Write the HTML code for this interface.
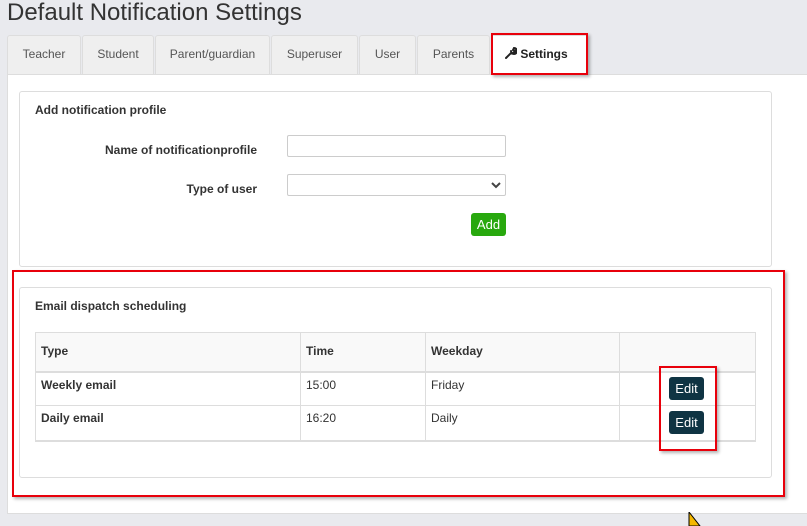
<!DOCTYPE html>
<html><head><meta charset="utf-8"><style>
*{box-sizing:border-box;margin:0;padding:0}
body{width:807px;height:524px;background:#e9eaee;font-family:"Liberation Sans",Arial,sans-serif;position:relative;overflow:hidden;color:#333}
.a{position:absolute}
h1{position:absolute;left:7px;top:0;font-size:24px;font-weight:normal;color:#333;line-height:26px}
.tab{position:absolute;top:35px;height:39px;background:#efefef;border:1px solid #ddd;border-bottom:none;border-radius:3px 3px 0 0;font-size:12px;color:#555;line-height:37px;text-align:center}
.main{position:absolute;left:7px;top:74px;width:810px;height:440px;background:#fff;border:1px solid #ddd}
.panel{position:absolute;left:19px;width:753px;background:#fff;border:1px solid #ddd;border-radius:3px}
.lbl{position:absolute;font-size:12px;font-weight:bold;color:#333;text-align:right}
.inp{position:absolute;left:287px;width:219px;height:22px;border:1px solid #ccc;border-radius:2px;background:#fff}
table{position:absolute;left:35px;top:332px;width:721px;border-collapse:collapse;font-size:12px;color:#333}
td{border:1px solid #ddd;padding:0 5px;vertical-align:top}
.edit{position:absolute;left:669px;width:35px;height:23px;background:#0f3443;border-radius:3px;color:#fff;font-size:13px;text-align:center;line-height:23px}
.red{position:absolute;border:2px solid #e8000b;box-shadow:2px 2px 3px rgba(0,0,0,.3)}
</style></head><body>
<h1>Default Notification Settings</h1>
<div class="main"></div>
<div class="tab" style="left:7px;width:74px">Teacher</div>
<div class="tab" style="left:82px;width:72px">Student</div>
<div class="tab" style="left:155px;width:115px">Parent/guardian</div>
<div class="tab" style="left:271px;width:87px">Superuser</div>
<div class="tab" style="left:359px;width:57px">User</div>
<div class="tab" style="left:417px;width:73px">Parents</div>
<div class="a" style="left:491px;top:35px;width:96px;height:40px;background:#fff;border:1px solid #ddd;border-bottom:none"></div>
<div class="a" style="left:505px;top:47px;font-size:12px;font-weight:bold;color:#222;line-height:14px"><svg width="12" height="12" viewBox="0 0 12 12" style="vertical-align:-1px"><path d="M1 11 L6.5 5.5 M6 4 A3 3 0 1 0 9 1 L8 3 L9 4 L11 3 A3 3 0 0 1 8 6" stroke="#222" stroke-width="2" fill="none" stroke-linecap="round"/></svg> Settings</div>
<div class="red" style="left:491px;top:33px;width:97px;height:42px"></div>

<div class="panel" style="top:91px;height:176px"></div>
<div class="a" style="left:35px;top:103px;font-size:12px;font-weight:bold">Add notification profile</div>
<div class="lbl" style="left:60px;top:143px;width:197px">Name of notificationprofile</div>
<div class="inp" style="top:135px"></div>
<div class="lbl" style="left:60px;top:182px;width:197px">Type of user</div>
<div class="inp" style="top:174px"><svg class="a" style="left:203px;top:6px" width="10" height="8" viewBox="0 0 10 8"><path d="M1 2 L5 6 L9 2" stroke="#444" stroke-width="2" fill="none"/></svg></div>
<div class="a" style="left:471px;top:213px;width:35px;height:23px;background:#28a80e;border-radius:3px;color:#fff;font-size:13px;text-align:center;line-height:23px">Add</div>

<div class="panel" style="top:287px;height:191px"></div>
<div class="a" style="left:35px;top:299px;font-size:12px;font-weight:bold">Email dispatch scheduling</div>
<table>
<tr style="height:39px;background:#f9f9f9"><td style="width:265px;padding-top:11px;font-weight:bold;border-bottom:2px solid #ddd">Type</td><td style="width:125px;padding-top:11px;font-weight:bold;border-bottom:2px solid #ddd">Time</td><td style="width:194px;padding-top:11px;font-weight:bold;border-bottom:2px solid #ddd">Weekday</td><td style="border-bottom:2px solid #ddd"></td></tr>
<tr style="height:34px"><td style="padding-top:5px;font-weight:bold">Weekly email</td><td style="padding-top:5px">15:00</td><td style="padding-top:5px">Friday</td><td></td></tr>
<tr style="height:35px"><td style="padding-top:5px;font-weight:bold;border-bottom:2px solid #ddd">Daily email</td><td style="padding-top:5px;border-bottom:2px solid #ddd">16:20</td><td style="padding-top:5px;border-bottom:2px solid #ddd">Daily</td><td style="border-bottom:2px solid #ddd"></td></tr>
</table>
<div class="edit" style="top:377px">Edit</div>
<div class="edit" style="top:411px">Edit</div>
<div class="red" style="left:659px;top:366px;width:58px;height:85px"></div>
<div class="red" style="left:12px;top:270px;width:773px;height:227px"></div>
<svg class="a" style="left:688px;top:512px" width="14" height="14" viewBox="0 0 14 14"><path d="M1 0 L1 14 L12 14 Z" fill="#f5b800" stroke="#000" stroke-width="1"/></svg>
</body></html>
